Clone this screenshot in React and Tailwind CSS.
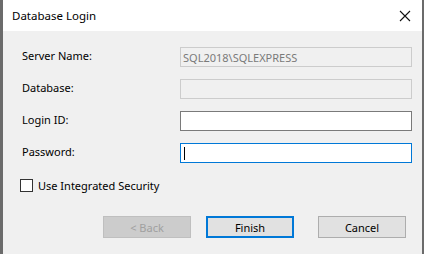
import React from 'react';

const rows = [
    { label: 'Server Name:', value: 'SQL2018\\SQLEXPRESS', disabled: true },
    { label: 'Database:', value: '', disabled: true },
    { label: 'Login ID:', value: '' },
    { label: 'Password:', value: '', focused: true },
];

export default function App() {
    return (
        <div
            className="w-[424px] h-[254px] flex flex-col border-l-[3px] border-r-[2px] border-[#6b6b6b] text-[11px] text-black overflow-hidden"
            style={{ fontFamily: '"Noto Sans", "Open Sans", sans-serif' }}
        >
            {/* title bar */}
            <div className="h-[31px] bg-white flex items-center justify-between pl-[9px] pr-[10px]">
                <span className="text-[11.5px] leading-none">Database Login</span>
                <svg width="12" height="12" viewBox="0 0 12 12" className="mr-[1px]">
                    <path d="M1 1L11 11M11 1L1 11" stroke="#111" strokeWidth="1.1" fill="none" />
                </svg>
            </div>

            <div className="flex-1 bg-[#f0f0f0] pt-[16px]">
                <div className="grid grid-cols-[158px_232px] gap-y-[12px] pl-[19px]">
                    {rows.map((r) => (
                        <React.Fragment key={r.label}>
                            <div className="h-[20px] flex items-center leading-none pb-[3px]">{r.label}</div>
                            <div
                                className={`h-[20px] flex items-center px-[2px] leading-none ${
                                    r.disabled
                                        ? 'bg-[#f0f0f0] border border-[#cccccc] text-[#7a7a7a]'
                                        : r.focused
                                        ? 'bg-white border border-[#0078d7]'
                                        : 'bg-white border border-[#7a7a7a]'
                                }`}
                            >
                                {r.value}
                                {r.focused && <span className="w-px h-[13px] bg-black ml-[1px]" />}
                            </div>
                        </React.Fragment>
                    ))}
                </div>

                <label className="flex items-center gap-[5px] pl-[17px] mt-[16px]">
                    <span className="w-[13px] h-[13px] border border-[#333] bg-white" />
                    <span className="leading-none">Use Integrated Security</span>
                </label>

                <div className="flex pl-[100px] mt-[24px]">
                    <button className="w-[88px] h-[22px] bg-[#cccccc] border border-[#bfbfbf] text-[#a0a0a0] leading-none">
                        &lt; Back
                    </button>
                    <button className="w-[88px] h-[22px] ml-[15px] bg-[#e1e1e1] border-2 border-[#0078d7] leading-none">
                        Finish
                    </button>
                    <button className="w-[88px] h-[22px] ml-[24px] bg-[#e1e1e1] border border-[#adadad] leading-none">
                        Cancel
                    </button>
                </div>
            </div>
        </div>
    );
}
